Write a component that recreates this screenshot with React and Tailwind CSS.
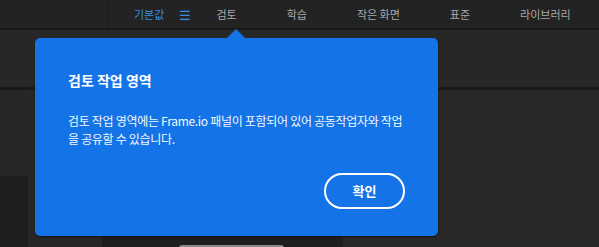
import React from 'react';

const navItems = ['검토', '학습', '작은 화면', '표준', '라이브러리'];

const App = () => {
  return (
    <div className="relative w-[599px] h-[247px] overflow-hidden bg-[#262626] font-['Noto_Sans_CJK_KR','Noto_Sans',sans-serif]">
      {/* workspace bar */}
      <div className="flex h-[30px] bg-[#232323] border-b-2 border-[#1a1a1a]">
        <div className="w-[109px] h-full border-r border-[#1b1b1b]" />
        <div className="flex items-center pl-[25px] text-[11px] leading-none">
          <span className="text-[#3a8ee0]">기본값</span>
          <span className="ml-[15px] text-[#3a8ee0] text-[13px]">☰</span>
          {navItems.map((item, i) => (
            <span key={item} className={`${i === 0 ? 'ml-[25px]' : 'ml-[50px]'} text-[#a9a9a9]`}>
              {item}
            </span>
          ))}
        </div>
      </div>

      {/* toolbar row */}
      <div className="h-[60px] bg-[#272727] border-b-[3px] border-[#191919]" />

      {/* panels */}
      <div className="flex h-[157px]">
        <div className="w-[28px] flex flex-col">
          <div className="h-[86px] bg-[#262626]" />
          <div className="flex-1 bg-[#1e1e1e]" />
        </div>
        <div className="w-[74px] bg-[#272727]" />
        <div className="w-[241px] flex flex-col">
          <div className="h-[86px] bg-[#262626]" />
          <div className="flex-1 bg-[#1e1e1e] flex items-end justify-center">
            <div className="w-[105px] h-[3px] bg-[#8a8a8a] rounded-t-sm mb-[-1px] ml-[18px]" />
          </div>
        </div>
        <div className="flex-1 bg-[#282828]" />
      </div>

      {/* coach mark */}
      <div className="absolute left-[35px] top-[38px] w-[403px] h-[198px] rounded-[5px] bg-[#1473e6] shadow-[0_1px_2px_rgba(0,0,0,0.5)] text-white">
        <div className="absolute -top-[9px] left-[191px] w-0 h-0 border-l-[10px] border-r-[10px] border-b-[10px] border-l-transparent border-r-transparent border-b-[#1473e6]" />
        <div className="px-[33px] pt-[32px]">
          <h3 className="text-[14px] font-bold leading-[20px]">검토 작업 영역</h3>
          <p className="mt-[22px] text-[12px] tracking-[-0.3px] leading-[18px] text-[#f4f8fe] whitespace-nowrap">
            검토 작업 영역에는 Frame.io 패널이 포함되어 있어 공동작업자와 작업
            <br />
            을 공유할 수 있습니다.
          </p>
          <div className="flex justify-end mt-[25px]">
            <button className="w-[81px] h-[36px] rounded-full border-2 border-white text-[13px] font-bold flex items-center justify-center">
              확인
            </button>
          </div>
        </div>
      </div>
    </div>
  );
};

export default App;
